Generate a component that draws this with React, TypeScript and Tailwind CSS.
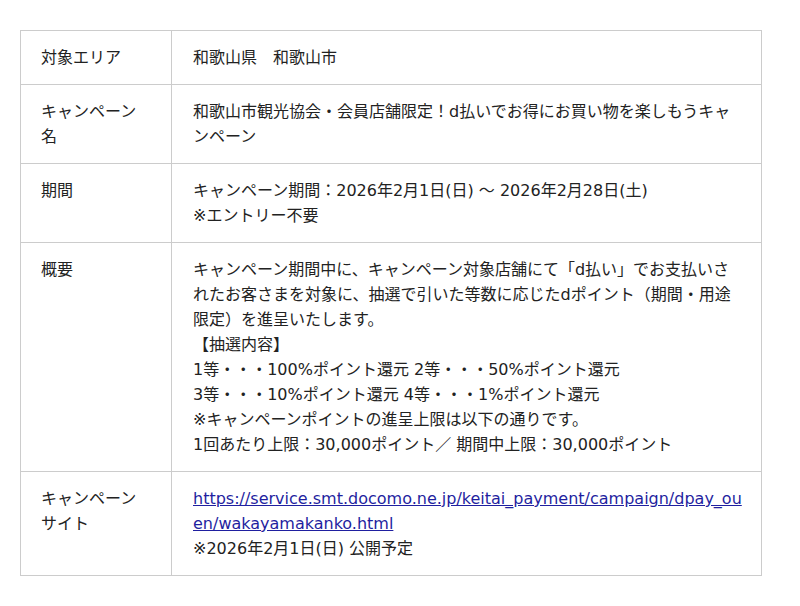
import React from "react";

const rows: { label: string; content: React.ReactNode }[] = [
  { label: "対象エリア", content: <p>和歌山県　和歌山市</p> },
  {
    label: "キャンペーン名",
    content: <p>和歌山市観光協会・会員店舗限定！d払いでお得にお買い物を楽しもうキャンペーン</p>,
  },
  {
    label: "期間",
    content: (
      <p>
        キャンペーン期間：2026年2月1日(日) 〜 2026年2月28日(土)
        <br />
        ※エントリー不要
      </p>
    ),
  },
  {
    label: "概要",
    content: (
      <p>
        キャンペーン期間中に、キャンペーン対象店舗にて「d払い」でお支払いされたお客さまを対象に、抽選で引いた等数に応じたdポイント（期間・用途限定）を進呈いたします。
        <br />
        【抽選内容】
        <br />
        1等・・・100%ポイント還元 2等・・・50%ポイント還元
        <br />
        3等・・・10%ポイント還元 4等・・・1%ポイント還元
        <br />
        ※キャンペーンポイントの進呈上限は以下の通りです。
        <br />
        1回あたり上限：30,000ポイント／ 期間中上限：30,000ポイント
      </p>
    ),
  },
  {
    label: "キャンペーンサイト",
    content: (
      <p>
        <a href="#" className="text-[#1f1fa0] underline break-all">
          https://service.smt.docomo.ne.jp/keitai_payment/campaign/dpay_ouen/wakayamakanko.html
        </a>
        <br />
        ※2026年2月1日(日) 公開予定
      </p>
    ),
  },
];

export default function App() {
  return (
    <div
      className="w-[800px] h-[606px] bg-white pt-[30px] px-[20px] text-[#222] text-[16px] leading-[25px]"
      style={{ fontFamily: '"DejaVu Sans", "Noto Sans CJK JP", sans-serif' }}
    >
      <table className="w-[742px] border-collapse table-fixed">
        <colgroup>
          <col className="w-[151px]" />
          <col />
        </colgroup>
        <tbody>
          {rows.map((r) => (
            <tr key={r.label}>
              <td className="border border-[#cccccc] align-top px-[20px] py-[14px]">{r.label}</td>
              <td className="border border-[#cccccc] align-top pl-[21px] pr-[17px] py-[14px]">{r.content}</td>
            </tr>
          ))}
        </tbody>
      </table>
    </div>
  );
}
